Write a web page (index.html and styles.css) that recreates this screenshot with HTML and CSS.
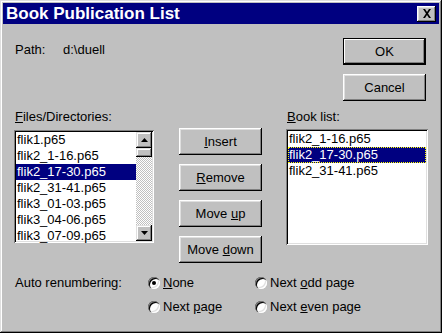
FILE: index.html
```html
<!DOCTYPE html>
<html lang="en">
<head>
    <meta charset="UTF-8">
    <title>Book Publication List</title>
    <link rel="stylesheet" href="styles.css">
</head>
<body>
<div class="window">
    <!-- Title bar -->
    <div class="titlebar">
        <span class="title">Book Publication List</span>
        <span class="close-btn">
            <svg width="10" height="9" viewBox="0 0 10 9"><path d="M1 0h2l2 3 2-3h2L6 4.5 9 9H7L5 6 3 9H1l3-4.5z" fill="#000"/></svg>
        </span>
    </div>

    <div class="dialog-body">
        <div class="top-row">
            <div class="path">
                <span class="path-label">Path:</span>
                <span>d:\duell</span>
            </div>
            <div class="side-buttons">
                <div class="btn btn-default"><span>OK</span></div>
                <div class="btn"><span>Cancel</span></div>
            </div>
        </div>

        <div class="main-row">
            <div class="files-col">
                <div class="label"><u>F</u>iles/Directories:</div>
                <div class="listbox files-box">
                    <ul class="items">
                        <li>flik1.p65</li>
                        <li>flik2_1-16.p65</li>
                        <li class="selected">flik2_17-30.p65</li>
                        <li>flik2_31-41.p65</li>
                        <li>flik3_01-03.p65</li>
                        <li>flik3_04-06.p65</li>
                        <li>flik3_07-09.p65</li>
                    </ul>
                    <div class="scrollbar">
                        <div class="sb-btn">
                            <svg width="7" height="4" viewBox="0 0 7 4"><path d="M3.5 0L7 4H0z" fill="#000"/></svg>
                        </div>
                        <div class="sb-thumb"></div>
                        <div class="sb-track"></div>
                        <div class="sb-btn">
                            <svg width="7" height="4" viewBox="0 0 7 4"><path d="M0 0h7L3.5 4z" fill="#000"/></svg>
                        </div>
                    </div>
                </div>
            </div>

            <div class="action-col">
                <div class="btn"><span><u>I</u>nsert</span></div>
                <div class="btn"><span><u>R</u>emove</span></div>
                <div class="btn"><span>Move <u>u</u>p</span></div>
                <div class="btn"><span>Move <u>d</u>own</span></div>
            </div>

            <div class="book-col">
                <div class="label"><u>B</u>ook list:</div>
                <div class="listbox book-box">
                    <ul class="items">
                        <li>flik2_1-16.p65</li>
                        <li class="selected focused">flik2_17-30.p65</li>
                        <li>flik2_31-41.p65</li>
                    </ul>
                </div>
            </div>
        </div>

        <div class="renumber">
            <div class="renumber-label">Auto renumbering:</div>
            <div class="radio-grid">
                <div class="radio"><span class="radio-dot checked"></span><span><u>N</u>one</span></div>
                <div class="radio"><span class="radio-dot"></span><span>Next <u>o</u>dd page</span></div>
                <div class="radio"><span class="radio-dot"></span><span>Next <u>p</u>age</span></div>
                <div class="radio"><span class="radio-dot"></span><span>Next <u>e</u>ven page</span></div>
            </div>
        </div>
    </div>
</div>
</body>
</html>
```

FILE: styles.css
```css
* {
    box-sizing: border-box;
}
body {
    margin: 0;
    background-color: #c0c0c0;
    font-family: "Liberation Sans", Arial, sans-serif;
    font-size: 13px;
    line-height: 16px;
    color: #000;
}
.window {
    width: 442px;
    height: 333px;
    padding: 3px;
    background-color: #c0c0c0;
    box-shadow: inset -1px -1px #000, inset 1px 1px #dfdfdf,
                inset -2px -2px #808080, inset 2px 2px #fff;
}
.titlebar {
    height: 21px;
    background-color: #000080;
    display: flex;
    align-items: center;
    justify-content: space-between;
    padding: 0 3px 0 3px;
}
.title {
    color: #fff;
    font-weight: bold;
    font-size: 17px;
}
.close-btn {
    width: 19px;
    height: 16px;
    background-color: #c0c0c0;
    display: flex;
    align-items: center;
    justify-content: center;
    box-shadow: inset -1px -1px #000, inset 1px 1px #fff,
                inset -2px -2px #808080, inset 2px 2px #dfdfdf;
}
.dialog-body {
    padding: 14px 11px 0 11px;
}
.top-row {
    display: flex;
    justify-content: space-between;
}
.path {
    padding: 4px 0 0 1px;
    display: flex;
}
.path-label {
    width: 48px;
}
.side-buttons {
    display: flex;
    flex-direction: column;
    gap: 9px;
    margin-right: 2px;
}
.btn {
    width: 83px;
    height: 27px;
    display: flex;
    align-items: center;
    justify-content: center;
    background-color: #c0c0c0;
    box-shadow: inset -1px -1px #000, inset 1px 1px #fff,
                inset -2px -2px #808080, inset 2px 2px #dfdfdf;
}
.btn-default {
    border: 1px solid #000;
    box-shadow: inset -1px -1px #000, inset 1px 1px #fff,
                inset -2px -2px #808080;
}
.main-row {
    display: flex;
    margin-top: 8px;
}
.label {
    height: 21px;
    padding-left: 1px;
}
.files-col {
    width: 140px;
}
.action-col {
    display: flex;
    flex-direction: column;
    gap: 9px;
    padding-top: 19px;
    margin-left: 25px;
}
.book-col {
    width: 142px;
    margin-left: 24px;
}
.book-col .label {
    height: 20px;
}
.listbox {
    background-color: #fff;
    padding: 2px;
    box-shadow: inset 1px 1px #808080, inset -1px -1px #fff,
                inset 2px 2px #000, inset -2px -2px #dfdfdf;
}
.files-box {
    height: 113px;
    display: flex;
    overflow: hidden;
}
.book-box {
    height: 116px;
}
.items {
    list-style: none;
    margin: 0;
    padding: 0;
    flex: 1;
}
.items li {
    height: 16px;
    padding-left: 1px;
    white-space: nowrap;
}
.items li.selected {
    background-color: #000080;
    color: #fff;
}
.items li.focused {
    outline: 1px dotted #ffff00;
    outline-offset: -1px;
}
.scrollbar {
    width: 16px;
    display: flex;
    flex-direction: column;
}
.sb-btn, .sb-thumb {
    background-color: #c0c0c0;
    box-shadow: inset -1px -1px #000, inset 1px 1px #dfdfdf,
                inset -2px -2px #808080, inset 2px 2px #fff;
}
.sb-btn {
    height: 16px;
    display: flex;
    align-items: center;
    justify-content: center;
}
.sb-thumb {
    height: 9px;
}
.sb-track {
    flex: 1;
    background: repeating-conic-gradient(#c0c0c0 0 25%, #fff 0 50%) 0 0 / 2px 2px;
}
.renumber {
    display: flex;
    margin-top: 12px;
}
.renumber-label {
    width: 134px;
    padding-left: 1px;
}
.radio-grid {
    display: grid;
    grid-template-columns: 107px auto;
    row-gap: 8px;
}
.radio {
    display: flex;
    align-items: center;
    gap: 3px;
}
.radio-dot {
    width: 12px;
    height: 12px;
    border-radius: 50%;
    background-color: #fff;
    display: flex;
    align-items: center;
    justify-content: center;
    box-shadow: inset 1px 1px #808080, inset 2px 2px #000,
                inset -1px -1px #fff, inset -2px -2px #dfdfdf;
}
.radio-dot.checked::after {
    content: "";
    width: 4px;
    height: 4px;
    border-radius: 50%;
    background-color: #000;
}
```
